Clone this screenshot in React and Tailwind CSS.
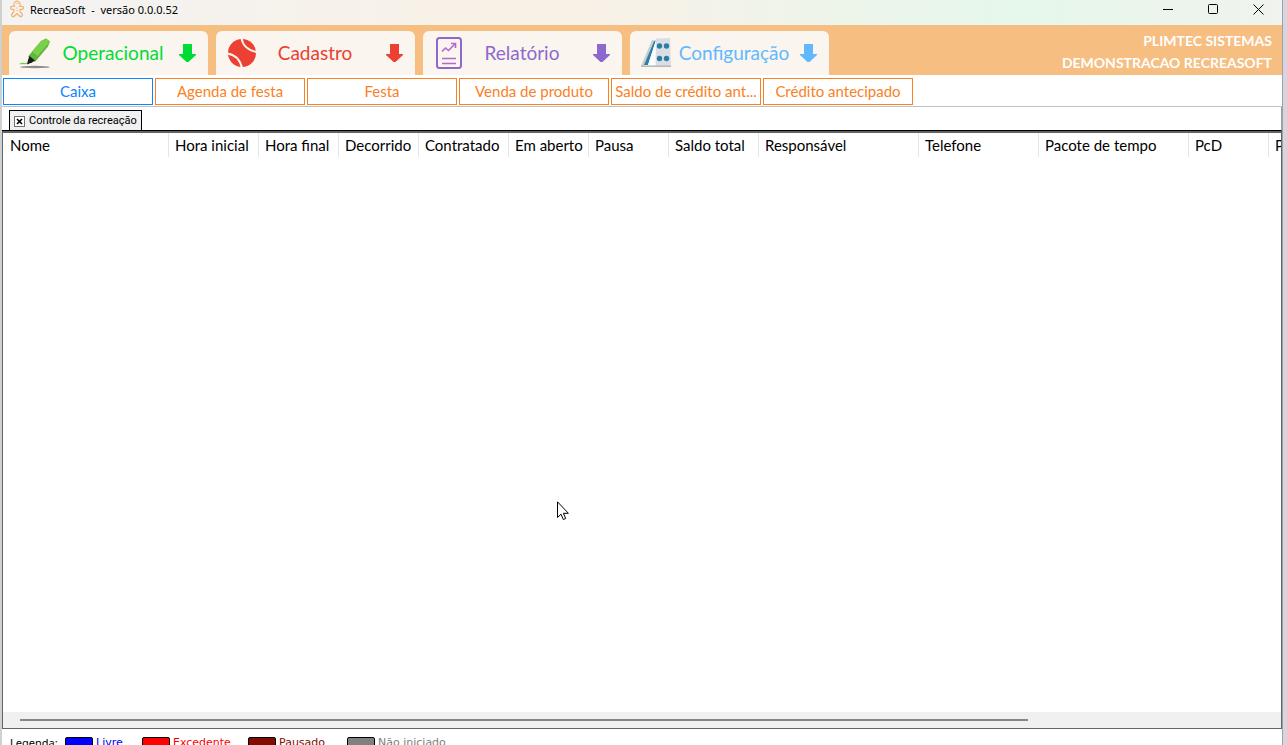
import { useState } from "react";

function HighlighterIcon() {
  return (
    <svg width="32" height="32" viewBox="0 0 32 32">
      <ellipse cx="16" cy="30" rx="15" ry="1.2" fill="#8b8b8b" />
      <path d="M1 27c3-2 4 1 7-1" stroke="#6fd33c" strokeWidth="1.4" fill="none" />
      <path d="M27 1.500 31 4.500 29 9.500 16 25 9 19.500 22 4z" fill="#5fb83a" />
      <path d="M27 1.500 31 4.500 18.500 19 13 14.500 22 4z" fill="#7bd04b" />
      <path d="M10.500 19 16 23.500 13 25.500 8 27.500 9 23z" fill="#1c1c1c" />
    </svg>
  );
}

function BallIcon() {
  return (
    <svg width="30" height="30" viewBox="0 0 30 30">
      <circle cx="15" cy="15" r="14" fill="#ec4032" />
      <path d="M14.500 0c1 7 6.500 12.500 15 14" stroke="#faf5ee" strokeWidth="2" fill="none" />
      <path d="M0 15.500c8 1 13 6 15 14.500" stroke="#faf5ee" strokeWidth="2" fill="none" />
    </svg>
  );
}

function ReportIcon() {
  return (
    <svg width="26" height="32" viewBox="0 0 26 32" fill="none">
      <rect x="1" y="1" width="24" height="30" rx="2.500" stroke="#8f68cf" strokeWidth="2" />
      <path d="M6 14.500 9.500 11l3 2.500L19 7" stroke="#b368cf" strokeWidth="1.600" />
      <path d="M15 6.500h4.500V11" stroke="#b368cf" strokeWidth="1.600" />
      <path d="M6 21.500h14M6 26.500h14" stroke="#b368cf" strokeWidth="1.600" />
    </svg>
  );
}

function ConfigIcon() {
  return (
    <svg width="32" height="32" viewBox="0 0 32 32">
      <path d="M12 3 14 3 4 29 1 29z" fill="#c6ced4" />
      <path d="M14 4 16 3.500 8 28 4 28z" fill="#2f7fa8" />
      <path d="M16 3 16 28 8 28z" fill="#fdfdfd" />
      <path d="M16 1.500 30 1 31 29 15.500 29z" fill="#d9dee2" />
      <path d="M1 28.500h30v1.500H1z" fill="#b4b9bc" />
      <circle cx="19.500" cy="9" r="2.700" fill="#2b7ca8" />
      <circle cx="26.500" cy="9" r="2.700" fill="#2b7ca8" />
      <circle cx="19.500" cy="21.500" r="2.700" fill="#2b7ca8" />
      <circle cx="26.500" cy="21.500" r="2.700" fill="#2b7ca8" />
    </svg>
  );
}

function DownArrow() {
  return (
    <svg width="17" height="18" viewBox="0 0 17 18" fill="currentColor" className="shrink-0">
      <path d="M4 0h9v10h4v1l-7.500 7h-2L0 11v-1h4z" />
    </svg>
  );
}

function AppLogo() {
  return (
    <svg width="14" height="18" viewBox="0 0 14 18" fill="none" stroke="#f5b06a" strokeWidth="1.200">
      <path d="M4.500 6a3 3 0 1 1 5 0l2.500.3a1.500 1.500 0 0 1 0 3L10 9.500l.3 2.500 1.700 2a1.500 1.500 0 0 1-2.500 2L7 13.500 4.500 16A1.500 1.500 0 0 1 2 14l1.700-2L4 9.500l-2-.2a1.500 1.500 0 0 1 0-3z" />
      <path d="M6 3.500h.8M7.500 3.500h.8M7 7.500v1M7 10v1" />
    </svg>
  );
}

const menus = [
  { label: "Operacional", icon: HighlighterIcon, color: "text-[#00dc37]", pad: "pr-1" },
  { label: "Cadastro", icon: BallIcon, color: "text-[#ec4032]", pad: "pr-3.5" },
  { label: "Relatório", icon: ReportIcon, color: "text-[#8f68cf]", pad: "pr-3.5" },
  { label: "Configuração", icon: ConfigIcon, color: "text-[#61b8ff]", pad: "pr-1" },
];

const actions = [
  "Caixa",
  "Agenda de festa",
  "Festa",
  "Venda de produto",
  "Saldo de crédito ant...",
  "Crédito antecipado",
];

const columns = [
  { label: "Nome", width: "w-[166px]" },
  { label: "Hora inicial", width: "w-[90px]" },
  { label: "Hora final", width: "w-[80px]" },
  { label: "Decorrido", width: "w-[80px]" },
  { label: "Contratado", width: "w-[90px]" },
  { label: "Em aberto", width: "w-[80px]" },
  { label: "Pausa", width: "w-[80px]" },
  { label: "Saldo total", width: "w-[90px]" },
  { label: "Responsável", width: "w-[160px]" },
  { label: "Telefone", width: "w-[120px]" },
  { label: "Pacote de tempo", width: "w-[150px]" },
  { label: "PcD", width: "w-[80px]" },
  { label: "P", width: "w-[80px]" },
];

const legend = [
  { label: "Livre", box: "bg-[#0000ff]", text: "text-[#0000ff]", width: "w-[77px]" },
  { label: "Excedente", box: "bg-[#ff0000]", text: "text-[#ff0000]", width: "w-[106px]" },
  { label: "Pausado", box: "bg-[#800d00]", text: "text-[#800d00]", width: "w-[99px]" },
  { label: "Não iniciado", box: "bg-[#808080]", text: "text-[#808080]", width: "w-[120px]" },
];

export default function App() {
  const [active, setActive] = useState("Caixa");

  return (
    <div className="relative flex h-screen overflow-hidden bg-[#d6d6e0] pr-1 font-['Lato',sans-serif] text-black">
      <div className="w-0.5 shrink-0 bg-[#d0d0d0]" />
      <main className="flex min-w-0 flex-1 flex-col border-r border-[#a0a0a0] bg-white">
        {/* Title bar */}
        <header className="flex h-[25px] shrink-0 items-start justify-between bg-linear-to-r from-[#f3f3f3] via-[#f8f1e6] via-40% to-[#f0f3ee]">
          <div className="flex h-full w-full items-start justify-between bg-linear-to-r from-transparent from-50% via-[#e6f7eb] via-80% to-[#f0f3ee]">
            <div className="flex items-start gap-1.5 pl-2">
              <AppLogo />
              <h1 className="font-['Noto_Sans',sans-serif] text-[11px] leading-5 whitespace-pre">RecreaSoft  -  versão 0.0.0.52</h1>
            </div>
            <div className="flex gap-[34px] pt-1 pr-[18px]">
              <button aria-label="Minimizar">
                <svg width="11" height="11" viewBox="0 0 11 11" stroke="currentColor"><path d="M0 5.500h10" /></svg>
              </button>
              <button aria-label="Maximizar">
                <svg width="11" height="11" viewBox="0 0 11 11" fill="none" stroke="currentColor"><rect x=".5" y=".5" width="9" height="9" rx="1" /></svg>
              </button>
              <button aria-label="Fechar">
                <svg width="11" height="11" viewBox="0 0 11 11" stroke="currentColor"><path d="m.5.5 10 10m0-10-10 10" /></svg>
              </button>
            </div>
          </div>
        </header>

        {/* Main menu */}
        <div className="flex h-[50px] shrink-0 items-end justify-between bg-[#f6be81] pr-2.5 pl-[7px]">
          <nav className="flex gap-2">
            {menus.map(({ label, icon: Icon, color, pad }) => (
              <button
                key={label}
                className={`flex h-11 w-[199px] items-center rounded-t-md bg-[#faf5ee] pr-3 pl-2.5 text-[19px] ${color}`}
              >
                <span className="flex w-8 shrink-0 justify-center">
                  <Icon />
                </span>
                <span className={`flex-1 text-center ${pad}`}>{label}</span>
                <DownArrow />
              </button>
            ))}
          </nav>
          <div className="h-full pt-[5px] text-right text-sm leading-[22px] font-bold text-white">
            <p>PLIMTEC SISTEMAS</p>
            <p>DEMONSTRACAO RECREASOFT</p>
          </div>
        </div>

        <div className="flex h-8 shrink-0 gap-0.5 border-b border-[#c0c0c0] pt-[3px] pl-px">
          {actions.map((label) => (
            <button
              key={label}
              onClick={() => setActive(label)}
              className={`h-[27px] w-[150px] border text-[15px] whitespace-nowrap ${
                active === label ? "border-[#0a84ff] text-[#0a84ff]" : "border-[#f98125] text-[#f98125]"
              }`}
            >
              {label}
            </button>
          ))}
        </div>

        {/* Open pages */}
        <div className="flex h-6 shrink-0 items-end border-r border-b border-r-[#a0a0a0] border-b-black pl-[7px]">
          <div className="flex h-5 items-center gap-1 border border-b-0 border-black bg-[#f0f0f0] px-1 pt-0.5 font-['Roboto',sans-serif] text-[11px]">
            <button aria-label="Fechar Controle da recreação" className="border border-[#707070] bg-white">
              <svg width="9" height="9" viewBox="0 0 9 9" stroke="#000" strokeWidth="1.600"><path d="m2 2 5 5m0-5-5 5" /></svg>
            </button>
            <span className="whitespace-nowrap">Controle da recreação</span>
          </div>
        </div>

        <section className="flex min-h-0 flex-1 flex-col border border-t-2 border-[#646464]">
          <div className="min-h-0 flex-1 overflow-hidden">
            <table className="w-[1346px] table-fixed border-separate border-spacing-0 text-left text-[15px] leading-6">
              <thead>
                <tr>
                  {columns.map((col, i) => (
                    <th
                      key={col.label}
                      className={`border-r border-[#e5e5e5] p-0 font-normal whitespace-nowrap ${i === 0 ? "pl-[7px]" : "pl-1.5"} ${col.width}`}
                    >
                      {col.label}
                    </th>
                  ))}
                </tr>
              </thead>
              <tbody />
            </table>
          </div>
          <div className="flex h-4 shrink-0 items-center bg-[#f0f0f0] pr-4 pl-[17px]">
            <div className="h-0.5 w-[81%] bg-[#868686]" />
          </div>
        </section>

        <footer className="flex h-4 shrink-0 overflow-hidden pt-[7px] pl-2 font-['DejaVu_Sans',sans-serif] text-[11px] leading-[14px]">
          <span className="w-[55px] shrink-0 font-['Noto_Sans',sans-serif]">Legenda:</span>
          {legend.map((item) => (
            <span key={item.label} className={`flex shrink-0 gap-[3px] whitespace-nowrap ${item.width} ${item.text}`}>
              <span className={`mt-px h-3 w-7 shrink-0 rounded-xs border border-black ${item.box}`} />
              {item.label}
            </span>
          ))}
        </footer>
      </main>

      {/* Pointer */}
      <svg className="pointer-events-none absolute top-[501px] left-[557px]" width="12" height="20" viewBox="0 0 12 20">
        <path d="M.5.800v15.700l3.500-3.300 2.300 5.300 2.400-1-2.300-5.200h5z" fill="#fff" stroke="#000" />
      </svg>
    </div>
  );
}
